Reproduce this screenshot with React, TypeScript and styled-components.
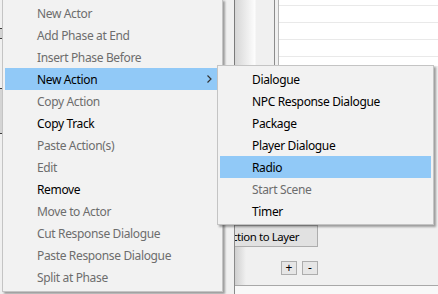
import React from 'react';
import styled, { createGlobalStyle } from 'styled-components';

const GlobalStyle = createGlobalStyle`
  html, body { margin: 0; padding: 0; background: #f0f0f0; }
  body { font-family: "Noto Sans", "Liberation Sans", sans-serif; }
`;

const Page = styled.div`
  position: relative;
  width: 438px;
  height: 294px;
  overflow: hidden;
  background: #f0f0f0;
  display: flex;
  flex-direction: column;
`;

// ---- the window behind the menus ----
const TopArea = styled.div`
  height: 224px;
  display: flex;
`;

const LeftPane = styled.div`
  width: 234px;
  flex-shrink: 0;
  display: flex;
  flex-direction: column;
`;

const EdgeBlock = styled.div<{ $top: number; $height: number }>`
  margin-top: ${p => p.$top}px;
  width: 3px;
  height: ${p => p.$height}px;
  background: #d4d4d4;
  border-top: 1px solid #3c3c3c;
  border-bottom: 1px solid #3c3c3c;
`;

const Splitter = styled.div`
  width: 39px;
  flex-shrink: 0;
  border-left: 1px solid #7a7a7a;
  border-right: 1px solid #8c8c8c;
  background: linear-gradient(90deg, #d6d6d6 0, #fdfdfd 20px, #f0f0f0 21px);
`;

const GridWrap = styled.div`
  flex: 1;
  display: flex;
  flex-direction: column;
  border-left: 1px solid #b4b4b4;
  margin-left: 3px;
`;

const Grid = styled.div`
  height: 66px;
  background: #fff;
  overflow: hidden;
`;

const GridRows = styled.div`
  margin-top: -11px;
`;

const GridRow = styled.div`
  height: 16px;
  border-bottom: 1px solid #e9e9e9;
`;

const BottomArea = styled.div`
  flex: 1;
  display: flex;
`;

const Gutter = styled.div`
  width: 234px;
  flex-shrink: 0;
`;

// scrolled panel: its content is clipped at the left edge
const Panel = styled.div`
  flex: 1;
  min-width: 0;
  overflow: hidden;
  display: flex;
  flex-direction: column;
  border-left: 1px solid #8a8a8a;
  background: linear-gradient(90deg, #cfcfcf 0, #f0f0f0 11px);
`;

const ButtonRow = styled.div`
  display: flex;
  justify-content: flex-end;
  width: 83px;
  margin-top: 1px;
`;

const WinButton = styled.button`
  flex-shrink: 0;
  height: 22px;
  padding: 0 18px 0 21px;
  border: 1px solid #adadad;
  background: #e1e1e1;
  font: 11.4px "Noto Sans", "Liberation Sans", sans-serif;
  letter-spacing: -0.4px;
  color: #000;
  white-space: nowrap;
`;

const SmallRow = styled.div`
  display: flex;
  gap: 5px;
  padding-left: 46px;
  margin-top: 14px;
`;

const SmallButton = styled.button`
  width: 16px;
  height: 14px;
  padding: 0;
  border: 1px solid #adadad;
  background: #e6e6e6;
  font: 12px/12px "Noto Sans", "Liberation Sans", sans-serif;
  color: #000;
`;

const Footer = styled.div`
  margin-top: 10px;
  flex: 1;
  border-top: 1px solid #a8a8a8;
  background: #f8f8f8;
`;

// ---- context menus ----
const Menu = styled.div<{ $left: number; $top: number; $width: number }>`
  position: absolute;
  left: ${p => p.$left}px;
  top: ${p => p.$top}px;
  width: ${p => p.$width}px;
  box-sizing: border-box;
  padding: 2px 2px 3px 2px;
  background: #f2f2f2;
  border: 1px solid #c4c4c4;
  box-shadow: 2px 2px 2px rgba(0, 0, 0, 0.35);
  display: flex;
  flex-direction: column;
`;

const SubMenu = styled(Menu)`
  padding-bottom: 2px;
`;

const Item = styled.div<{ $disabled?: boolean; $active?: boolean }>`
  position: relative;
  height: 22px;
  display: flex;
  align-items: center;
  padding-left: 32px;
  font-size: 12px;
  letter-spacing: -0.35px;
  color: ${p => (p.$disabled ? '#6d6d6d' : '#000')};
  background: ${p => (p.$active ? '#91c9f7' : 'transparent')};
  white-space: nowrap;
`;

const Arrow = styled.svg`
  position: absolute;
  right: 8px;
  top: 7px;
`;

const mainItems: { label: string; disabled?: boolean; active?: boolean; sub?: boolean }[] = [
  { label: 'New Actor', disabled: true },
  { label: 'Add Phase at End', disabled: true },
  { label: 'Insert Phase Before', disabled: true },
  { label: 'New Action', active: true, sub: true },
  { label: 'Copy Action', disabled: true },
  { label: 'Copy Track' },
  { label: 'Paste Action(s)', disabled: true },
  { label: 'Edit', disabled: true },
  { label: 'Remove' },
  { label: 'Move to Actor', disabled: true },
  { label: 'Cut Response Dialogue', disabled: true },
  { label: 'Paste Response Dialogue', disabled: true },
  { label: 'Split at Phase', disabled: true },
];

const subItems: { label: string; disabled?: boolean; active?: boolean }[] = [
  { label: 'Dialogue' },
  { label: 'NPC Response Dialogue' },
  { label: 'Package' },
  { label: 'Player Dialogue' },
  { label: 'Radio', active: true },
  { label: 'Start Scene', disabled: true },
  { label: 'Timer' },
];

export default function App() {
  return (
    <>
      <GlobalStyle />
      <Page>
        <TopArea>
          <LeftPane>
            <EdgeBlock $top={28} $height={9} />
            <EdgeBlock $top={49} $height={44} />
          </LeftPane>
          <Splitter />
          <GridWrap>
            <Grid>
              <GridRows>
                {Array.from({ length: 5 }).map((_, i) => (
                  <GridRow key={i} />
                ))}
              </GridRows>
            </Grid>
          </GridWrap>
        </TopArea>
        <BottomArea>
          <Gutter />
          <Panel>
            <ButtonRow>
              <WinButton>Add Selection to Layer</WinButton>
            </ButtonRow>
            <SmallRow>
              <SmallButton>+</SmallButton>
              <SmallButton>-</SmallButton>
            </SmallRow>
            <Footer />
          </Panel>
        </BottomArea>

        <Menu $left={2} $top={-1} $width={221}>
          {mainItems.map(it => (
            <Item key={it.label} $disabled={it.disabled} $active={it.active}>
              {it.label}
              {it.sub && (
                <Arrow width="5" height="8" viewBox="0 0 5 8">
                  <polyline points="0.5,0.5 4,4 0.5,7.5" fill="none" stroke="#333" strokeWidth="1.2" />
                </Arrow>
              )}
            </Item>
          ))}
        </Menu>

        <SubMenu $left={217} $top={65} $width={217}>
          {subItems.map(it => (
            <Item key={it.label} $disabled={it.disabled} $active={it.active}>
              {it.label}
            </Item>
          ))}
        </SubMenu>
      </Page>
    </>
  );
}
